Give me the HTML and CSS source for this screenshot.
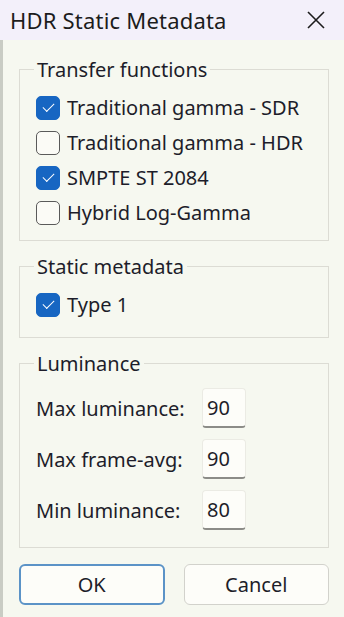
FILE: index.html
```html
<!DOCTYPE html>
<html lang="en">
<head>
    <meta charset="UTF-8">
    <meta name="viewport" content="width=device-width, initial-scale=1.0">
    <title>HDR Static Metadata</title>
    <link rel="stylesheet" href="styles.css">
</head>
<body>
    <div class="dialog">
        <div class="titlebar">
            <div class="title">HDR Static Metadata</div>
            <div class="close">
                <svg width="20" height="20" viewBox="0 0 20 20"><path d="M2 2 L18 18 M18 2 L2 18" stroke="#1c1c1c" stroke-width="1.6" fill="none"/></svg>
            </div>
        </div>
        <div class="content">
            <fieldset class="group">
                <legend>Transfer functions</legend>
                <label class="check"><span class="box checked"></span>Traditional gamma - SDR</label>
                <label class="check"><span class="box"></span>Traditional gamma - HDR</label>
                <label class="check"><span class="box checked"></span>SMPTE ST 2084</label>
                <label class="check"><span class="box"></span>Hybrid Log-Gamma</label>
            </fieldset>
            <fieldset class="group meta">
                <legend>Static metadata</legend>
                <label class="check"><span class="box checked"></span>Type 1</label>
            </fieldset>
            <fieldset class="group lum">
                <legend>Luminance</legend>
                <div class="field"><span class="field-label">Max luminance:</span><div class="input">90</div></div>
                <div class="field"><span class="field-label">Max frame-avg:</span><div class="input">90</div></div>
                <div class="field"><span class="field-label">Min luminance:</span><div class="input">80</div></div>
            </fieldset>
            <div class="buttons">
                <button class="btn default">OK</button>
                <button class="btn">Cancel</button>
            </div>
        </div>
    </div>
</body>
</html>
```

FILE: styles.css
```css
body {
    margin: 0;
    padding: 0;
    font-family: "Noto Sans", sans-serif;
    color: #1d1d2a;
    background-color: #f6f8f0;
}
.dialog {
    width: 344px;
    height: 617px;
    box-sizing: border-box;
    border-left: 3px solid #c9ccc4;
    background-color: #f6f8f0;
}
.titlebar {
    height: 40px;
    display: flex;
    justify-content: space-between;
    align-items: center;
    background-color: #f3f0fa;
    margin-left: -3px;
    padding: 0 18px 0 10px;
}
.title {
    font-size: 22px;
    letter-spacing: 0.2px;
    color: #1c1c1c;
}
.close {
    display: flex;
    align-items: center;
}
.content {
    padding: 16px 15px 0 16px;
}
.group {
    border: 1px solid #dcdcd4;
    margin: 0 0 12px 0;
    padding: 7px 0 10px 16px;
}
.group legend {
    font-size: 20px;
    padding: 0 3px;
    margin-left: -2px;
}
.check {
    display: flex;
    align-items: center;
    font-size: 20px;
    height: 35px;
    gap: 7px;
}
.box {
    width: 24px;
    height: 24px;
    box-sizing: border-box;
    border: 1.5px solid #5a5a5a;
    border-radius: 5px;
    background-color: #fbfbf6;
    display: flex;
    align-items: center;
    justify-content: center;
}
.box.checked {
    background-color: #1766c2;
    border-color: #1766c2;
}
.box.checked::after {
    content: "";
    width: 10px;
    height: 5px;
    border-left: 1.6px solid #fff;
    border-bottom: 1.6px solid #fff;
    transform: rotate(-45deg);
    margin-top: -3px;
}
.meta {
    padding-bottom: 15px;
}
.lum {
    padding-top: 0;
    padding-bottom: 17px;
}
.field {
    display: flex;
    align-items: center;
    margin-top: 11px;
}
.field-label {
    font-size: 20px;
    width: 166px;
}
.input {
    width: 44px;
    height: 40px;
    box-sizing: border-box;
    background-color: #fdfdf9;
    border: 1px solid #ebebe4;
    border-bottom: 2px solid #8c8c88;
    border-radius: 4px;
    font-size: 20px;
    padding: 5px 0 0 4px;
}
.buttons {
    display: flex;
    gap: 19px;
    margin-top: 16px;
}
.btn {
    width: 146px;
    height: 41px;
    font-family: "Noto Sans", sans-serif;
    font-size: 20px;
    color: #1d1d2a;
    background-color: #fdfdf9;
    border: 1px solid #d2d2cc;
    border-radius: 6px;
}
.btn.default {
    border: 2px solid #5b93c7;
}
```
